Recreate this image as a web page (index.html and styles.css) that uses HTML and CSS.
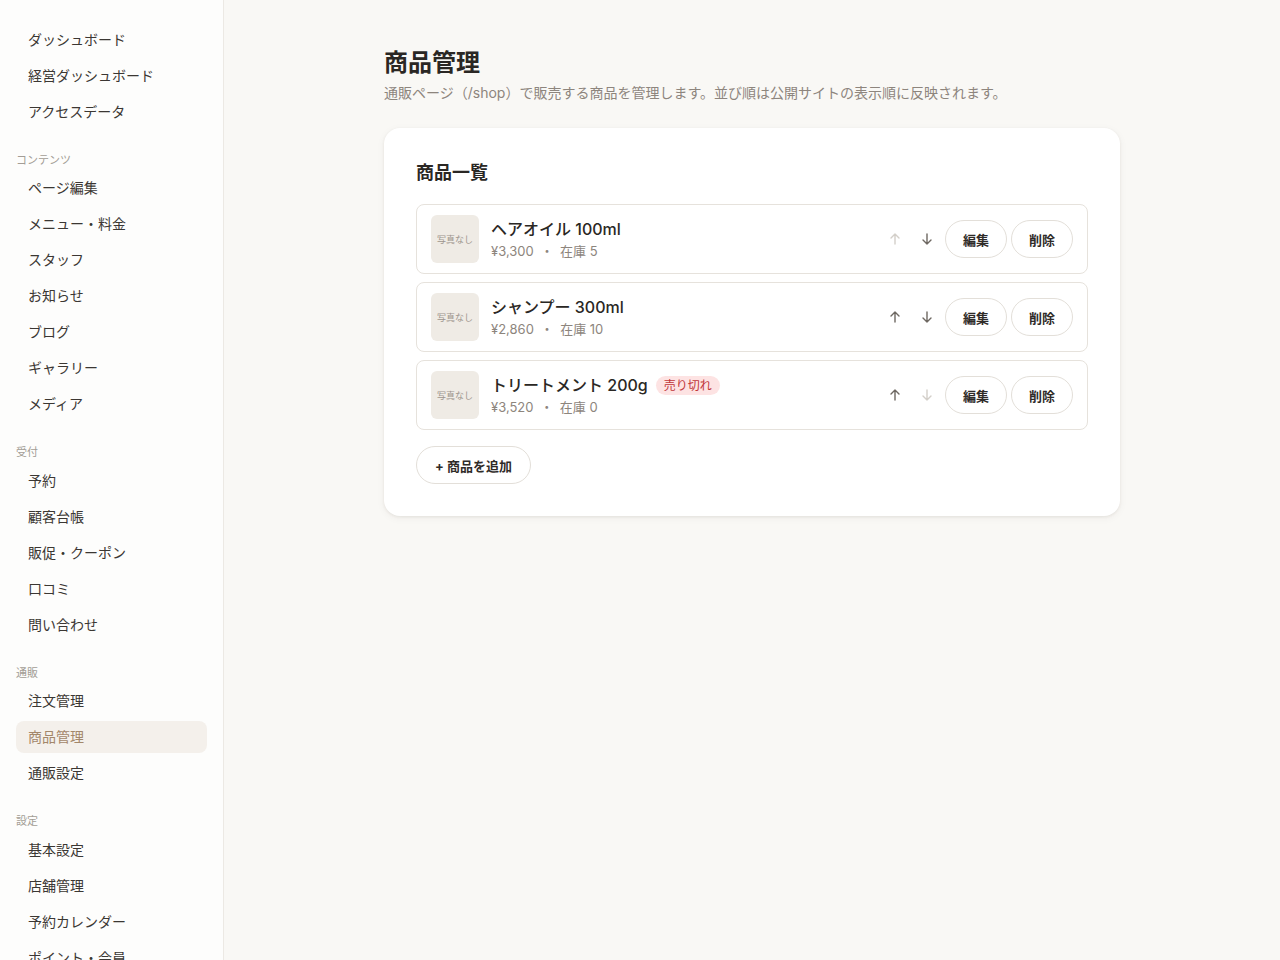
FILE: index.html
```html
<!DOCTYPE html>
<html lang="ja">
<head>
	<meta charset="UTF-8">
	<title>商品管理</title>
	<link rel="stylesheet" href="styles.css">
</head>
<body>
	<div class="layout">
		<aside class="sidebar">
			<nav class="nav">
				<a class="nav-item">ダッシュボード</a>
				<a class="nav-item">経営ダッシュボード</a>
				<a class="nav-item">アクセスデータ</a>

				<div class="nav-label">コンテンツ</div>
				<a class="nav-item">ページ編集</a>
				<a class="nav-item">メニュー・料金</a>
				<a class="nav-item">スタッフ</a>
				<a class="nav-item">お知らせ</a>
				<a class="nav-item">ブログ</a>
				<a class="nav-item">ギャラリー</a>
				<a class="nav-item">メディア</a>

				<div class="nav-label">受付</div>
				<a class="nav-item">予約</a>
				<a class="nav-item">顧客台帳</a>
				<a class="nav-item">販促・クーポン</a>
				<a class="nav-item">口コミ</a>
				<a class="nav-item">問い合わせ</a>

				<div class="nav-label">通販</div>
				<a class="nav-item">注文管理</a>
				<a class="nav-item active">商品管理</a>
				<a class="nav-item">通販設定</a>

				<div class="nav-label">設定</div>
				<a class="nav-item">基本設定</a>
				<a class="nav-item">店舗管理</a>
				<a class="nav-item">予約カレンダー</a>
				<a class="nav-item">ポイント・会員</a>
				<a class="nav-item">アカウント</a>
			</nav>
		</aside>

		<main class="main">
			<div class="content">
				<h1 class="page-title">商品管理</h1>
				<p class="page-desc">通販ページ（/shop）で販売する商品を管理します。並び順は公開サイトの表示順に反映されます。</p>

				<section class="card">
					<h2 class="card-title">商品一覧</h2>

					<ul class="product-list">
						<li class="product">
							<div class="thumb">写真なし</div>
							<div class="info">
								<div class="name">ヘアオイル 100ml</div>
								<div class="meta">¥3,300 <span class="dot">・</span> 在庫 5</div>
							</div>
							<div class="actions">
								<button class="arrow" disabled>
									<svg width="14" height="14" viewBox="0 0 14 14"><path d="M7 12V2M3 6l4-4 4 4"/></svg>
								</button>
								<button class="arrow">
									<svg width="14" height="14" viewBox="0 0 14 14"><path d="M7 2v10M3 8l4 4 4-4"/></svg>
								</button>
								<button class="btn">編集</button>
								<button class="btn">削除</button>
							</div>
						</li>
						<li class="product">
							<div class="thumb">写真なし</div>
							<div class="info">
								<div class="name">シャンプー 300ml</div>
								<div class="meta">¥2,860 <span class="dot">・</span> 在庫 10</div>
							</div>
							<div class="actions">
								<button class="arrow">
									<svg width="14" height="14" viewBox="0 0 14 14"><path d="M7 12V2M3 6l4-4 4 4"/></svg>
								</button>
								<button class="arrow">
									<svg width="14" height="14" viewBox="0 0 14 14"><path d="M7 2v10M3 8l4 4 4-4"/></svg>
								</button>
								<button class="btn">編集</button>
								<button class="btn">削除</button>
							</div>
						</li>
						<li class="product">
							<div class="thumb">写真なし</div>
							<div class="info">
								<div class="name">トリートメント 200g <span class="badge">売り切れ</span></div>
								<div class="meta">¥3,520 <span class="dot">・</span> 在庫 0</div>
							</div>
							<div class="actions">
								<button class="arrow">
									<svg width="14" height="14" viewBox="0 0 14 14"><path d="M7 12V2M3 6l4-4 4 4"/></svg>
								</button>
								<button class="arrow" disabled>
									<svg width="14" height="14" viewBox="0 0 14 14"><path d="M7 2v10M3 8l4 4 4-4"/></svg>
								</button>
								<button class="btn">編集</button>
								<button class="btn">削除</button>
							</div>
						</li>
					</ul>

					<button class="btn add-btn">+ 商品を追加</button>
				</section>
			</div>
		</main>
	</div>
</body>
</html>
```

FILE: styles.css
```css
* {
	margin: 0;
	padding: 0;
	box-sizing: border-box;
}

body {
	font-family: Inter, "Noto Sans CJK JP", sans-serif;
	color: #2a2724;
	background-color: #f9f8f5;
	height: 960px;
	overflow: hidden;
}

.layout {
	display: flex;
	min-height: 100vh;
}

/* sidebar */
.sidebar {
	width: 224px;
	flex-shrink: 0;
	background-color: #fdfdfc;
	border-right: 1px solid #ece9e4;
	padding: 23.5px 16px 0 16px;
	height: 100vh;
	overflow: hidden;
}

.nav {
	display: flex;
	flex-direction: column;
	gap: 4px;
}

.nav-item {
	display: block;
	height: 32px;
	line-height: 32px;
	padding-left: 12px;
	font-size: 14px;
	color: #3b3733;
	border-radius: 8px;
}

.nav-item.active {
	background-color: #f4f0eb;
	color: #a3876a;
}

.nav-label {
	margin-top: 20px;
	height: 16.5px;
	line-height: 16px;
	font-size: 11px;
	color: #a39d96;
}

/* main */
.main {
	flex: 1;
	padding: 48px 32px;
}

.content {
	max-width: 736px;
	margin: 0 auto;
}

.page-title {
	font-size: 24px;
	font-weight: 700;
	line-height: 30px;
	color: #2a2724;
}

.page-desc {
	margin-top: 4px;
	font-size: 14px;
	line-height: 22px;
	color: #8d857d;
}

.card {
	margin-top: 24px;
	background-color: #fff;
	border-radius: 16px;
	padding: 32px;
	box-shadow: 0 1px 3px rgba(60, 45, 30, 0.08), 0 2px 8px rgba(60, 45, 30, 0.05);
}

.card-title {
	font-size: 18px;
	font-weight: 700;
	line-height: 26px;
	margin-bottom: 18px;
}

.product-list {
	list-style: none;
	display: flex;
	flex-direction: column;
	gap: 8px;
}

.product {
	display: flex;
	align-items: center;
	gap: 12px;
	padding: 10px 14px;
	border: 1px solid #e6e2dc;
	border-radius: 8px;
}

.thumb {
	width: 48px;
	height: 48px;
	flex-shrink: 0;
	background-color: #efebe5;
	border-radius: 6px;
	display: flex;
	align-items: center;
	justify-content: center;
	font-size: 9px;
	color: #9d958d;
}

.info {
	flex: 1;
}

.name {
	font-size: 16px;
	line-height: 22px;
	font-weight: 500;
	color: #2a2724;
	display: flex;
	align-items: center;
	gap: 8px;
}

.meta {
	margin-top: 2px;
	font-size: 13px;
	line-height: 18px;
	color: #8d857d;
}

.dot {
	margin: 0 3px;
}

.badge {
	display: inline-block;
	font-size: 12px;
	line-height: 19px;
	font-weight: 400;
	padding: 0 8px;
	border-radius: 10px;
	background-color: #fde3e3;
	color: #c1363a;
}

.actions {
	display: flex;
	align-items: center;
	gap: 4px;
}

.arrow {
	width: 28px;
	height: 28px;
	border: none;
	background: none;
	display: flex;
	align-items: center;
	justify-content: center;
}

.arrow svg {
	fill: none;
	stroke: #6e6862;
	stroke-width: 1.4;
	stroke-linecap: round;
	stroke-linejoin: round;
}

.arrow[disabled] svg {
	stroke: #d3cfc9;
}

.btn {
	font-family: Inter, "Noto Sans CJK JP", sans-serif;
	height: 38px;
	padding: 0 17px;
	font-size: 13px;
	font-weight: 700;
	color: #2f2b28;
	background-color: #fff;
	border: 1px solid #e3dfd9;
	border-radius: 19px;
}

.add-btn {
	margin-top: 16px;
	padding: 0 18px;
}
```
